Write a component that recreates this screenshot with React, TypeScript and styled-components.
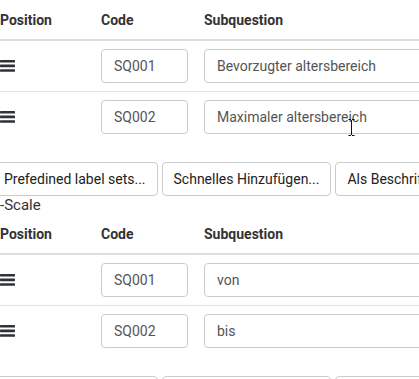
import styled, { createGlobalStyle } from 'styled-components'

const GlobalStyle = createGlobalStyle`
  html, body {
    margin: 0;
    padding: 0;
    overflow: hidden;
    background: #fff;
  }
  body {
    font-family: Roboto, "Liberation Sans", sans-serif;
    font-size: 14px;
    color: #333;
  }
`

interface Subquestion {
  code: string
  text: string
}

interface Section {
  label?: string
  rows: Subquestion[]
}

const sections: Section[] = [
  {
    rows: [
      { code: 'SQ001', text: 'Bevorzugter altersbereich' },
      { code: 'SQ002', text: 'Maximaler altersbereich' },
    ],
  },
  {
    label: '-Scale',
    rows: [
      { code: 'SQ001', text: 'von' },
      { code: 'SQ002', text: 'bis' },
    ],
  },
]

const Page = styled.div`
  position: relative;
  width: 760px;
  margin-left: -8px;
`

const SectionLabel = styled.div`
  padding-left: 8px;
  line-height: 18px;
  font-size: 15px;
  color: #333;
`

const Table = styled.div`
  display: flex;
  flex-direction: column;
`

const Row = styled.div<{ $header?: boolean; $last?: boolean }>`
  display: grid;
  grid-template-columns: 101px 103px 1fr;
  border-bottom: ${(p) =>
    p.$header ? '2px solid #dddddd' : p.$last ? 'none' : '1px solid #e3e3e3'};
`

const HeadCell = styled.div`
  padding: 10px 8px 8px;
  line-height: 21px;
  font-weight: 700;
  color: #333;
`

const Cell = styled.div`
  padding: 8px;
  display: flex;
  align-items: center;
`

const Handle = styled.svg`
  display: block;
  margin-top: -1px;
  color: #2f3237;
`

const TextInput = styled.input`
  box-sizing: border-box;
  width: 100%;
  height: 34px;
  padding: 6px 12px;
  border: 1px solid #cccccc;
  border-radius: 4px;
  font-family: Roboto, "Liberation Sans", sans-serif;
  font-size: 14px;
  color: #555;
  background: #fff;
  outline: none;
`

const ButtonBar = styled.div`
  display: flex;
  gap: 4px;
  margin-top: 20px;
`

const Button = styled.button`
  box-sizing: border-box;
  height: 34px;
  padding: 0 11px;
  border: 1px solid #cccccc;
  border-radius: 4px;
  background: #fff;
  font-family: Roboto, "Liberation Sans", sans-serif;
  font-size: 14px;
  color: #222;
  white-space: nowrap;
  flex-shrink: 0;
`

const Cursor = styled.svg`
  position: absolute;
  left: 356px;
  top: 119px;
  pointer-events: none;
`

const BarsIcon = () => (
  <Handle width="15" height="12" viewBox="0 0 15 12">
    <rect x="0" y="0" width="15" height="2.6" rx="0.6" fill="currentColor" />
    <rect x="0" y="4.6" width="15" height="2.6" rx="0.6" fill="currentColor" />
    <rect x="0" y="9.2" width="15" height="2.6" rx="0.6" fill="currentColor" />
  </Handle>
)

const SubquestionTable = ({ section }: { section: Section }) => (
  <>
    {section.label && <SectionLabel>{section.label}</SectionLabel>}
    <Table>
      <Row $header>
        <HeadCell>Position</HeadCell>
        <HeadCell>Code</HeadCell>
        <HeadCell>Subquestion</HeadCell>
      </Row>
      {section.rows.map((row, i) => (
        <Row key={row.code} $last={i === section.rows.length - 1}>
          <Cell>
            <BarsIcon />
          </Cell>
          <Cell>
            <TextInput defaultValue={row.code} />
          </Cell>
          <Cell>
            <TextInput defaultValue={row.text} />
          </Cell>
        </Row>
      ))}
    </Table>
    <ButtonBar>
      <Button>Prefedined label sets...</Button>
      <Button>Schnelles Hinzufügen...</Button>
      <Button>Als Beschriftungsset speichern</Button>
    </ButtonBar>
  </>
)

export default function App() {
  return (
    <>
      <GlobalStyle />
      <Page>
        {sections.map((s, i) => (
          <SubquestionTable key={i} section={s} />
        ))}
        <Cursor width="7" height="17" viewBox="0 0 7 17">
          <path d="M0.5 0.5h2.5M4 0.5h2.5M3.5 1v15M0.5 16.5h2.5M4 16.5h2.5" stroke="#111" strokeWidth="1" fill="none" />
        </Cursor>
      </Page>
    </>
  )
}
